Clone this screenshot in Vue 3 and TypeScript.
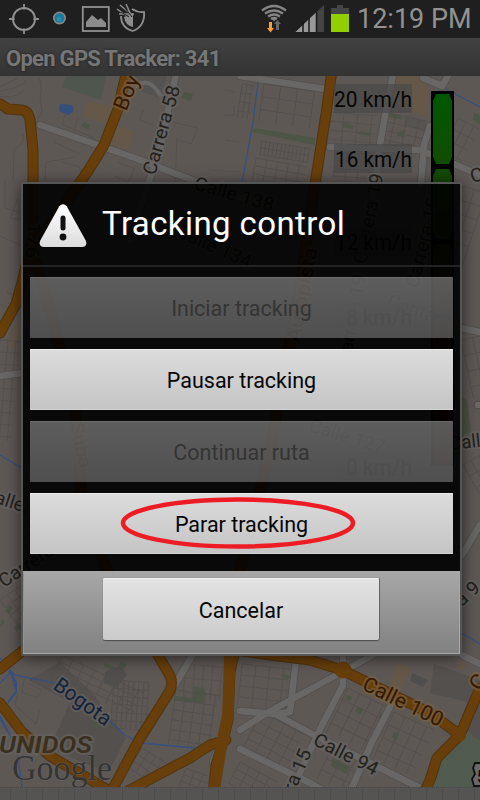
<script setup lang="ts">
interface Label { text: string; x: number; y: number; angle: number; size: number; width: number; kind: string }
interface Block { x: number; y: number; w: number; h: number; angle: number; dx: number; dy: number }
interface Action { label: string; enabled: boolean; marked: boolean }

const actions: Action[] = [
  { label: 'Iniciar tracking', enabled: false, marked: false },
  { label: 'Pausar tracking', enabled: true, marked: false },
  { label: 'Continuar ruta', enabled: false, marked: false },
  { label: 'Parar tracking', enabled: true, marked: true },
]

const blocks: Block[] = [
  { x: 264, y: 84, w: 52, h: 38, angle: 8, dx: 17, dy: 13 },
  { x: 242, y: 84, w: 12, h: 34, angle: 8, dx: 5, dy: 9 },
  { x: 262, y: 141, w: 48, h: 14, angle: 9, dx: 4, dy: 7 },
  { x: 256, y: 158, w: 52, h: 22, angle: 10, dx: 11, dy: 8 },
  { x: 330, y: 112, w: 46, h: 32, angle: 5, dx: 14, dy: 9 },
  { x: 384, y: 112, w: 44, h: 34, angle: 12, dx: 12, dy: 9 },
  { x: 335, y: 152, w: 36, h: 26, angle: 4, dx: 12, dy: 8 },
  { x: 458, y: 118, w: 24, h: 44, angle: 28, dx: 9, dy: 12 },
  { x: 463, y: 186, w: 24, h: 130, angle: 18, dx: 12, dy: 14 },
  { x: 461, y: 340, w: 20, h: 60, angle: -12, dx: 12, dy: 16 },
  { x: 463, y: 465, w: 20, h: 100, angle: -30, dx: 9, dy: 13 },
  { x: 0, y: 340, w: 20, h: 100, angle: 5, dx: 8, dy: 12 },
  { x: 0, y: 600, w: 22, h: 50, angle: -35, dx: 9, dy: 9 },
  { x: 62, y: 655, w: 90, h: 26, angle: 25, dx: 12, dy: 7 },
  { x: 114, y: 680, w: 36, h: 48, angle: 4, dx: 5, dy: 8 },
  { x: 176, y: 690, w: 42, h: 54, angle: 8, dx: 10, dy: 10 },
  { x: 186, y: 664, w: 38, h: 34, angle: 5, dx: 9, dy: 14 },
  { x: 242, y: 664, w: 48, h: 42, angle: 6, dx: 14, dy: 11 },
  { x: 262, y: 712, w: 48, h: 46, angle: 28, dx: 13, dy: 10 },
  { x: 348, y: 688, w: 46, h: 50, angle: 26, dx: 13, dy: 13 },
  { x: 394, y: 712, w: 44, h: 52, angle: 24, dx: 12, dy: 14 },
  { x: 240, y: 762, w: 42, h: 24, angle: 28, dx: 11, dy: 8 },
  { x: 332, y: 748, w: 36, h: 34, angle: 26, dx: 13, dy: 12 },
  { x: 142, y: 748, w: 30, h: 24, angle: 32, dx: 8, dy: 8 },
  { x: 186, y: 768, w: 26, h: 18, angle: 20, dx: 9, dy: 7 },
]

function gridPath(b: Block): string {
  const parts: string[] = []
  for (let x = 0; x <= b.w; x += b.dx) parts.push(`M${x} 0V${b.h}`)
  for (let y = 0; y <= b.h; y += b.dy) parts.push(`M0 ${y}H${b.w}`)
  return parts.join('')
}

const labels: Label[] = [
  { text: 'Boy', x: 126, y: 112, angle: -67, size: 21, width: 36, kind: 'avenue' },
  { text: 'Carrera 58', x: 155, y: 176, angle: -74, size: 19, width: 92, kind: 'street' },
  { text: 'Calle 138', x: 193, y: 189, angle: 16, size: 19, width: 82, kind: 'street' },
  { text: 'Calle 134', x: 175, y: 236, angle: 24, size: 19, width: 80, kind: 'street' },
  { text: 'Carrera 19', x: 366, y: 265, angle: -79, size: 19, width: 92, kind: 'street' },
  { text: 'Carrera 15', x: 418, y: 289, angle: -76, size: 19, width: 92, kind: 'street' },
  { text: 'Autopista', x: 299, y: 343, angle: -79, size: 19, width: 96, kind: 'avenue' },
  { text: 'Carrera 19', x: 350, y: 366, angle: -80, size: 19, width: 92, kind: 'street' },
  { text: 'Canta', x: 386, y: 306, angle: 19, size: 19, width: 50, kind: 'street' },
  { text: 'Suba', x: 70, y: 424, angle: 78, size: 19, width: 46, kind: 'avenue' },
  { text: 'Calle 127', x: 308, y: 431, angle: 17, size: 19, width: 78, kind: 'street' },
  { text: '176', x: 28, y: 222, angle: 94, size: 19, width: 36, kind: 'street' },
  { text: 'Calle', x: -18, y: 499, angle: 18, size: 19, width: 42, kind: 'street' },
  { text: 'Carrera', x: 4, y: 588, angle: -34, size: 19, width: 62, kind: 'street' },
  { text: 'Calle', x: 450, y: 450, angle: -6, size: 19, width: 41, kind: 'street' },
  { text: 'Carrera 9', x: 422, y: 643, angle: -42, size: 19, width: 80, kind: 'street' },
  { text: 'C', x: 472, y: 183, angle: -15, size: 19, width: 13, kind: 'street' },
  { text: 'Bogota', x: 52, y: 688, angle: 36, size: 21, width: 66, kind: 'river' },
  { text: 'Calle 100', x: 361, y: 689, angle: 26, size: 21, width: 87, kind: 'avenue' },
  { text: 'Calle 94', x: 312, y: 744, angle: 27, size: 19, width: 70, kind: 'street' },
  { text: 'Carrera 15', x: 276, y: 837, angle: -67, size: 19, width: 92, kind: 'street' },
  { text: 'C', x: 480, y: 692, angle: -58, size: 21, width: 15, kind: 'avenue' },
]

const speeds = [
  { text: '20 km/h', y: 84, width: 78 }, { text: '16 km/h', y: 144, width: 77 }, { text: '12 km/h', y: 227, width: 77 },
  { text: '8 km/h', y: 302, width: 66 }, { text: '4 km/h', y: 377, width: 66 }, { text: '0 km/h', y: 452, width: 66 },
]
const segments = [91, 166, 241, 316, 391]

const avenues = [
  'M0 104L8 109L22 110Q28 111 30 119L33 150V238L22 282L16 304L0 333',
  'M127 70L118 109L104 145L88 171L52 222L33 250L50 310L75 410L82 500L103 560L120 600',
  'M332 70L326 114L315 184L298 300L270 450L240 570L234 655L230 672L228 720L222 745L216 765L213 795',
  'M154 648L170 676Q173 682 170 691L139 740L111 792',
  'M0 703L22 732L50 756L113 793',
  'M0 669L25 649',
  'M126 792L190 758L210 745L226 740',
  'M236 650L270 655L310 660L342 670L430 713L460 735L480 688',
  'M460 735L437 758L430 780L424 793',
]
const roads = [
  'M40 125L135 158L200 183L260 205',
  'M177 70L168 110L160 150L148 184L130 240',
  'M240 76L325 89', 'M330 147L420 150L480 175', 'M394 70L386 110L379 150L372 210',
  'M423 78L442 86L448 76', 'M430 126L424 145L421 184',
  'M0 376L22 373', 'M461 328L480 332', 'M462 555L480 525',
  'M240 730L265 714L320 684L373 655', 'M296 660L290 712L275 714M240 711L275 714L316 736L420 788',
  'M343 655L343 685L322 725L298 777', 'M392 703L372 742L351 790', 'M240 749L310 783L323 790',
  'M462 655L480 664', 'M193 654L175 685', 'M213 762L219 745',
]
</script>

<template>
  <main class="screen">
    <header class="status">
      <svg class="tray" viewBox="0 0 150 38">
        <g fill="none" stroke="#8f8f8f" stroke-width="2">
          <circle cx="24" cy="19" r="11" />
          <path d="M24 4V13M24 25V34M9 19H18M30 19H39" stroke-width="1.8" />
        </g>
        <circle cx="24" cy="19" r="9.5" fill="#1f1f1f" />
        <circle cx="59.500" cy="18" r="6.500" fill="#8b8680" />
        <circle cx="59.500" cy="18" r="4.800" fill="#16799b" />
        <circle cx="59" cy="19" r="2.500" fill="#268db1" />
        <rect x="82.800" y="7" width="26" height="24" fill="none" stroke="#919191" stroke-width="1.800" />
        <path d="M86 27V22L92 15L98 20L101 18L106 23V27Z" fill="#8c8c8c" />
        <path d="M132 9Q139 13 144 12C145 22 140 29 132.500 31C126 29 121 24 121 16" fill="none" stroke="#8d8d8d" stroke-width="1.800" />
        <path d="M124 17L133 13V27C128 26 125 23 124 17Z" fill="#8d8d8d" />
        <path d="M117 9L131 19M120 5L133 16M126 4L131 15M119 14L134 14" stroke="#8d8d8d" stroke-width="1.500" />
        <path d="M125 8L132 17M121 12L129 17" stroke="#1f1f1f" stroke-width="1" />
      </svg>
      <svg class="signals" viewBox="260 0 90 38">
        <g fill="none" stroke="#858585" stroke-width="2.300">
          <path d="M262 10.500Q274 1.500 286 10.500" /><path d="M265 13.500Q274 7.500 283 13.500" />
          <path d="M268 16.500Q274 12.500 280 16.500" /><path d="M271 19Q274 16.800 277 19" />
        </g>
        <path d="M271.500 18.500H276.500L274 21.500Z" fill="#858585" />
        <path d="M269 22H272V28H274L270.500 32.500L267 28H269Z" fill="#ff9c32" />
        <path d="M276 30V24H274L277.500 20L281 24H279V30Z" fill="#666" />
        <path d="M295.500 32L324 5V32Z" fill="#444" />
        <path d="M295.500 32L316 12.500V32Z" fill="#999" />
        <path d="M303 22V32M309 18V32M316.500 12V32" stroke="#181818" stroke-width="1.500" />
        <path d="M331 8H337V5H343V8H349V14H331Z" fill="#454545" />
        <rect x="331" y="14" width="18" height="18" fill="#91cf00" />
      </svg>
      <span class="clock">12:19 PM</span>
    </header>
    <div class="titlebar">Open GPS Tracker: 341</div>

    <svg class="map" viewBox="0 76 480 724">
      <defs>
        <linearGradient id="speedFill" x1="0" y1="91" x2="0" y2="466" gradientUnits="userSpaceOnUse">
          <stop offset="0" stop-color="#005800" /><stop offset=".25" stop-color="#164900" />
          <stop offset=".55" stop-color="#352000" /><stop offset="1" stop-color="#410b00" />
        </linearGradient>
        <pattern id="tiles" x="10" y="787" width="16" height="16" patternUnits="userSpaceOnUse">
          <path d="M.5 0V16M0 .5H16" stroke="#474747" stroke-width="1" stroke-dasharray="1 1" />
        </pattern>
      </defs>
      <rect y="76" width="480" height="724" fill="#5e5855" />
      <g fill="#5a5450">
        <path d="M28 680L60 662L90 690L126 738L108 773L50 748L70 702Z" fill="#53504e" />
        <path d="M134 76H167L160 98L137 90Z" fill="#555351" />
        <path d="M434 664L480 680V742L459 724L468 702L430 693Z" fill="#53504e" />
        <path d="M105 672L121 665L127 675L117 687L104 682Z" fill="#4f4e4c" />
        <path d="M412 673L428 680L423 687L410 681Z" fill="#504e4c" />
        <path d="M405 115L426 121V132L404 125Z" fill="#575350" />
      </g>
      <g fill="#655849">
        <path d="M87 101L113 106L107 125L83 116Z" /><path d="M117 126L134 131L128 150L108 144Z" />
        <path d="M394 76H420L428 84V117L390 103Z" /><path d="M397 662L411 668L402 688L390 684Z" />
        <path d="M458 660L466 663L462 671L456 669Z" /><path d="M8 345L20 315V335L15 348Z" />
      </g>
      <g fill="#4d5546">
        <path d="M66 76H106L101 100L62 87Z" fill="#4e564d" />
        <path d="M254 128L315 138V145L252 132Z" /><path d="M344 122L354 126L353 129L342 127Z" />
        <path d="M360 131L371 133L370 136L358 134Z" /><path d="M398 132L405 129L404 138L397 136Z" />
        <path d="M390 113L403 117L402 120L389 117Z" /><path d="M184 92L193 94L191 101L181 98Z" />
        <path d="M84 122L90 125L88 129L81 126Z" /><path d="M174 696L193 698L194 686L205 689L204 704L174 700Z" />
        <path d="M104 663L115 667L112 670L104 667ZM121 661L127 664L124 669L118 667ZM92 717L100 720L99 730L92 727Z" />
        <path d="M347 695L352 697L350 701L345 699ZM358 706L363 710L360 715L355 711ZM380 712L384 714L382 718L379 716ZM394 732L399 735L396 740L392 737ZM333 758L350 767L346 774L331 766Z" />
        <path d="M284 674L290 676L288 680L283 678ZM474 113L480 115V124L473 120Z" />
        <path d="M461 397L467 400L471 432L461 437Z" /><path d="M9 605L13 608L9 614L5 611ZM2 619L5 622L0 628ZM18 622L22 626L17 632L14 628Z" />
        <path d="M467 733L480 740V787H430L437 760Z" fill="#515b4f" />
      </g>
      <path d="M60 104L72 105L74 111L68 115L59 111Z" fill="#354f7d" />
      <g fill="none" stroke="#524e4b" stroke-width=".8">
        <path v-for="(b, i) in blocks" :key="i" :d="gridPath(b)" :transform="`translate(${b.x} ${b.y}) rotate(${b.angle})`" />
        <path d="M0 87L18 78M0 91Q25 87 26 80M0 97Q22 97 24 89M39 78Q43 88 40 96L42 112L36 122M66 113L62 124L96 139M78 118L74 131M13 182L14 150L23 142V134M45 182L46 162L76 157M54 142L80 154M61 162L78 166L84 176M118 162L135 169L128 182L115 176M143 110L140 120L154 126M164 120L198 128L191 144L176 139M177 138L175 182M225 90L235 92M234 105V115H224M225 140L240 142M209 170L240 172M5 182V208L18 212M18 198L10 218L19 220ZM0 236L22 246M6 292L22 299M0 304L18 315M24 679L22 692L37 698L42 690L28 683M18 693L15 705L36 724L40 710" />
      </g>
      <g fill="none" stroke="#344f80" stroke-width="1.300">
        <path d="M258 82L253 122L242 183M446 89L480 107M0 455L22 468M0 658L14 675L56 683L93 706L125 735L141 743L195 748M10 673L0 683M11 673L16 691L8 703M0 716L8 731L17 750L22 787M461 633L480 644" />
        <path d="M9 671L16 682V692L8 702M0 718L8 732" stroke-width="2" />
      </g>
      <g fill="none" stroke-linejoin="round" stroke-linecap="round">
        <path v-for="d in roads" :key="d" :d="d" stroke="#514e4b" stroke-width="8" />
        <path v-for="d in roads" :key="d" :d="d" stroke="#696766" stroke-width="6.500" />
        <path d="M137 86Q149 76 160 95" stroke="#696766" stroke-width="4" />
        <path v-for="d in avenues" :key="d" :d="d" stroke="#51350f" stroke-width="11" />
        <path v-for="d in avenues" :key="d" :d="d" stroke="#683f0b" stroke-width="8.800" />
        <path d="M230 650L228 715L221 747L214 792" stroke="#683f0b" stroke-width="11.500" />
      </g>
      <circle cx="343" cy="670" r="8.500" fill="#683f0b" /><circle cx="459" cy="735" r="7" fill="#683f0b" />
      <circle cx="478" cy="405" r="4" fill="#6b6968" stroke="#4c4946" />

      <text class="name district" x="-1" y="753" textLength="93" lengthAdjust="spacingAndGlyphs">UNIDOS</text>
      <text v-for="(l, i) in labels" :key="i" :class="['name', l.kind]" :font-size="l.size"
        :textLength="l.width" lengthAdjust="spacingAndGlyphs" :transform="`translate(${l.x} ${l.y}) rotate(${l.angle})`">{{ l.text }}</text>
      <text class="brand" x="12" y="780" textLength="100" lengthAdjust="spacingAndGlyphs">Google</text>
      <path d="M480 763L475 763L473 768L475 774L472 779L474 786H480" fill="#686868" stroke="#111" stroke-width="1.800" />
      <text class="shield" x="477" y="783">5</text>

      <g v-for="s in speeds" :key="s.text">
        <rect x="334" :y="s.y" width="78" height="29" fill="#474747" fill-opacity=".66" />
        <text class="speed" x="412" :y="s.y + 23" text-anchor="end" :textLength="s.width" lengthAdjust="spacingAndGlyphs">{{ s.text }}</text>
      </g>
      <rect x="431" y="91" width="23" height="375" fill="#000" />
      <path v-for="y in segments" :key="y" :d="`M436 ${y + 3}H449L452 ${y + 10}V${y + 66}L449 ${y + 73}H436L433 ${y + 66}V${y + 10}Z`" fill="url(#speedFill)" />
      <rect y="787" width="480" height="13" fill="#555453" />
      <rect y="787" width="480" height="13" fill="url(#tiles)" />
    </svg>

    <section class="dialog" role="dialog">
      <div class="heading">
        <svg class="warning" viewBox="0 0 48 44">
          <defs><linearGradient id="alertFill" x1="0" y1="0" x2="0" y2="1"><stop stop-color="#fff" /><stop offset="1" stop-color="#dcdcdc" /></linearGradient></defs>
          <path d="M20.300 2.200Q24 -1.500 27.700 2.200L47 37Q48.500 43 43 43H5Q-.5 43 1 37Z" fill="url(#alertFill)" />
          <path d="M24 14V24" stroke="#111" stroke-width="5" stroke-linecap="round" /><circle cx="24" cy="33" r="3.400" fill="#111" />
        </svg>
        <h1>Tracking control</h1>
      </div>
      <div class="actions">
        <button v-for="a in actions" :key="a.label" :disabled="!a.enabled" class="action">
          <span>{{ a.label }}</span>
          <svg v-if="a.marked" class="mark" viewBox="0 0 236 52"><ellipse cx="118" cy="26" rx="115" ry="23.500" /></svg>
        </button>
      </div>
      <footer><button class="cancel">Cancelar</button></footer>
    </section>
  </main>
</template>

<style>
body { margin: 0; background: #1f1f1f; }
</style>

<style scoped>
.screen { position: relative; width: 480px; height: 800px; overflow: hidden; font-family: Roboto, "Liberation Sans", sans-serif; }
.status { display: flex; align-items: center; height: 38px; background: #1f1f1f; }
.tray { width: 150px; height: 38px; }
.signals { width: 90px; height: 38px; margin-left: 110px; }
.clock { margin-left: 7px; color: #929292; font-size: 27px; line-height: 38px; white-space: nowrap; }
.titlebar { height: 38px; box-sizing: border-box; padding-left: 6px; background: linear-gradient(#424242, #333); color: #767676; font-size: 22px; font-weight: 700; line-height: 41px; letter-spacing: -.72px; text-shadow: 0 0 3px #222; }
.map { display: block; width: 480px; height: 724px; }
.name { fill: #24211b; stroke: #676462; stroke-width: 4px; stroke-opacity: .65; stroke-linejoin: round; paint-order: stroke; }
.avenue { fill: #321903; stroke: #7c6040; }
.river { fill: #152338; }
.district { font-size: 24px; font-weight: 600; font-style: italic; fill: #3a3020; }
.brand { font-family: "Liberation Serif", serif; font-size: 36px; fill: #343434; stroke: #777; stroke-width: 1px; stroke-opacity: .5; paint-order: stroke; }
.shield { font-size: 18px; font-weight: 700; fill: #090909; }
.speed { font-size: 22px; fill: #060606; }
.dialog { position: absolute; left: 21px; top: 182px; width: 441px; height: 474px; box-sizing: border-box; border: 2px solid #555; border-radius: 2px; display: flex; flex-direction: column; background: rgba(0, 0, 0, .895); background-clip: padding-box; box-shadow: 0 2px 16px rgba(0, 0, 0, .62); }
.heading { display: flex; align-items: center; height: 83px; box-sizing: border-box; padding: 0 0 2px 16px; border-bottom: 2px solid #232323; }
.warning { width: 48px; height: 44px; margin-top: 4px; }
h1 { margin: 0 0 0 15px; color: #fff; font-size: 33px; font-weight: 400; line-height: 40px; letter-spacing: .4px; white-space: nowrap; }
.actions { display: flex; flex-direction: column; gap: 11px; flex: 1; padding: 10px 7px 0; }
button { font-family: inherit; font-size: 21.500px; border: 0; padding: 0; color: #050505; }
.action { position: relative; flex: none; width: 423px; height: 61px; border-radius: 1px; background: linear-gradient(#dcdcdc, #c4c4c4); box-shadow: inset 0 1px #eee, inset 0 -1px #d5d5d5; line-height: 63px; }
.action:disabled { color: #343434; background: linear-gradient(rgba(205, 205, 205, .43), rgba(190, 190, 190, .39)); box-shadow: inset 0 1px rgba(255, 255, 255, .1); }
.mark { position: absolute; left: 90px; top: 4px; width: 236px; height: 52px; fill: none; stroke: #ed1c24; stroke-width: 4.500px; }
footer { height: 83px; box-sizing: border-box; display: flex; justify-content: center; align-items: flex-start; padding: 6px 1px 0 0; background: linear-gradient(#a7a7a7, #818181); border: 1px solid #a8a8a8; border-left-color: #929292; }
.cancel { width: 276px; height: 62px; border-radius: 2px; background: linear-gradient(#e4e4e4, #cbcbcb); box-shadow: inset 0 1px #f1f1f1, 0 1px 1px #4c4c4c, 1px 0 1px #666; line-height: 66px; }
</style>
